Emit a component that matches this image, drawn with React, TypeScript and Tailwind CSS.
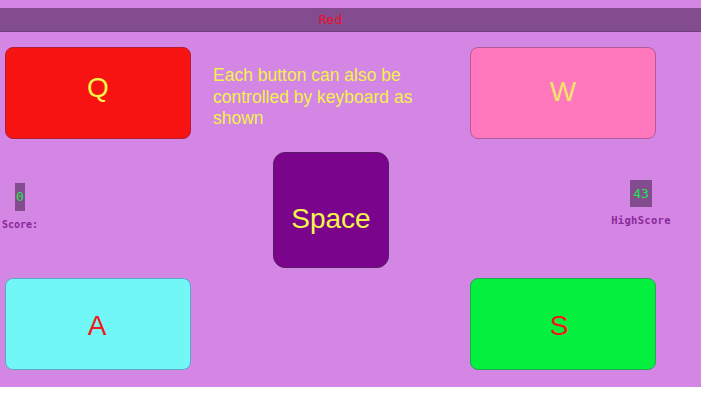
const digital = { fontFamily: '"DejaVu Sans Mono", monospace' };

function KeyButton({ label, bg, border, text, className }: { label: string; bg: string; border: string; text: string; className: string }) {
  return (
    <div className={`flex items-center justify-center rounded-lg border ${bg} ${border} ${className}`}>
      <span className={`font-['Liberation_Sans',Arial,sans-serif] text-[28px] ${text}`}>{label}</span>
    </div>
  );
}

export default function App() {
  return (
    <div className="w-[701px] h-[387px] bg-[#d486e4] pt-[8px]">
      <div className="h-[24px] bg-[#824c8e] border-b border-[#6e3e7a] flex items-center justify-center pr-[40px]">
        <span className="text-[13px] text-[#e8102a]" style={digital}>Red</span>
      </div>

      <div className="flex items-start mt-[15px] h-[92px]">
        <KeyButton
          label="Q"
          bg="bg-[#f81313]"
          border="border-[#b0203a]"
          text="text-[#f5f54a] pb-[10px]"
          className="ml-[5px] w-[186px] h-[92px]"
        />
        <p className="ml-[22px] mt-[18px] w-[240px] text-[17.5px] leading-[21.5px] text-[#f2f24a] font-['Liberation_Sans',Arial,sans-serif]">
          Each button can also be controlled by keyboard as shown
        </p>
        <KeyButton
          label="W"
          bg="bg-[#ff78be]"
          border="border-[#b35a9a]"
          text="text-[#f5e26a] pb-[2px]"
          className="ml-[17px] w-[186px] h-[92px]"
        />
      </div>

      <div className="flex items-start mt-[13px] h-[115px]">
        <div className="w-[80px] flex flex-col items-start pt-[31px]">
          <div className="ml-[15px] w-[10px] h-[28px] bg-[#824c8e] flex items-center justify-center">
            <span className="text-[13px] text-[#22e84a]" style={digital}>0</span>
          </div>
          <span className="ml-[2px] mt-[6px] text-[10px] font-bold text-[#8a2a9a]" style={digital}>Score:</span>
        </div>
        <div className="ml-[193px] w-[116px] h-[116px] rounded-xl bg-[#7a058c] border border-[#5a1a66] flex items-center justify-center">
          <span className="text-[28px] text-[#f5f54a] pt-[18px] font-['Liberation_Sans',Arial,sans-serif]">Space</span>
        </div>
        <div className="ml-[219px] w-[66px] flex flex-col items-center pt-[28px]">
          <div className="w-[22px] h-[27px] bg-[#824c8e] flex items-center justify-center">
            <span className="text-[13px] text-[#22e84a]" style={digital}>43</span>
          </div>
          <span className="mt-[6px] text-[10.5px] font-bold text-[#8a2a9a] tracking-[0.3px]" style={digital}>HighScore</span>
        </div>
      </div>

      <div className="flex items-start mt-[11px]">
        <KeyButton
          label="A"
          bg="bg-[#72f7f7]"
          border="border-[#5aa8c8]"
          text="text-[#f01818] pt-[4px] pr-[2px]"
          className="ml-[5px] w-[186px] h-[92px]"
        />
        <KeyButton
          label="S"
          bg="bg-[#03f03f]"
          border="border-[#22a850]"
          text="text-[#f01818] pt-[4px] pr-[8px]"
          className="ml-[279px] w-[186px] h-[92px]"
        />
      </div>
    </div>
  );
}
